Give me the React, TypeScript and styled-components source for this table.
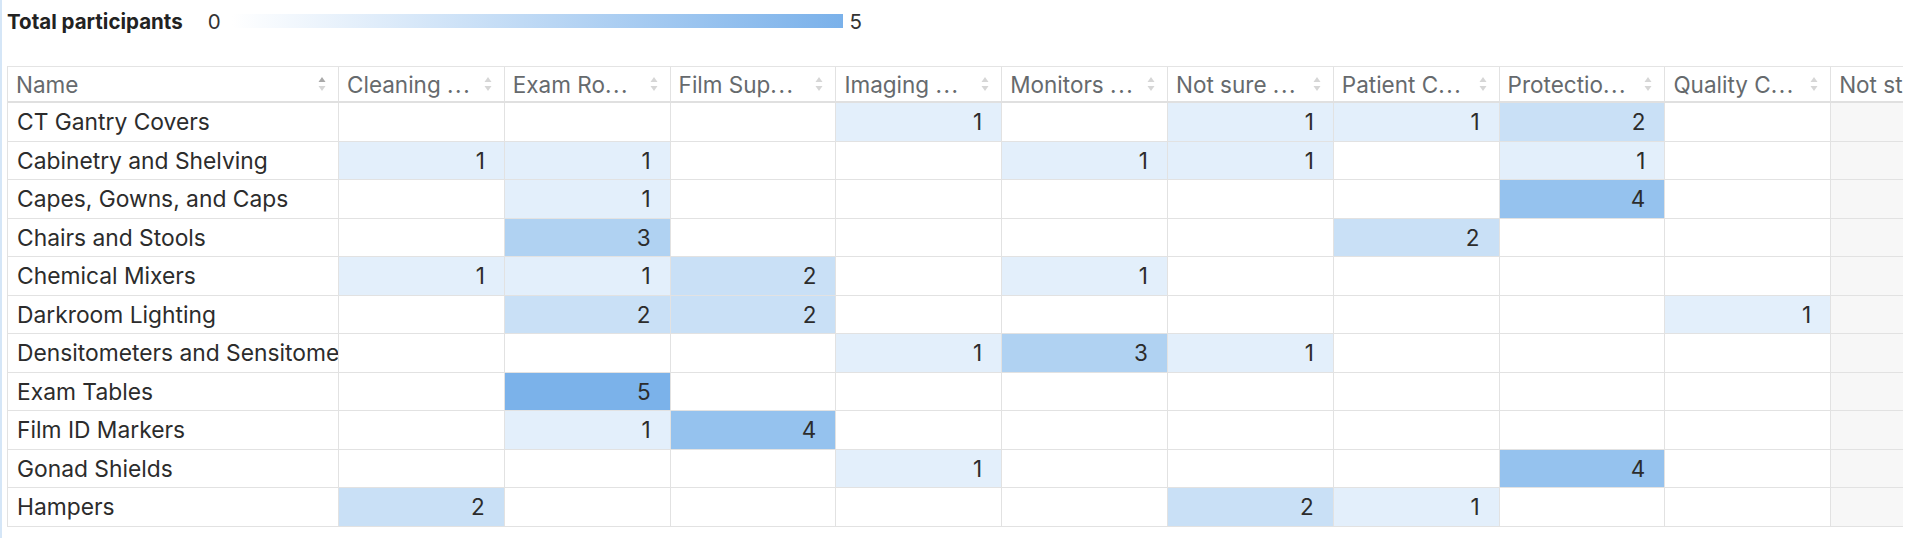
import React from "react";
import styled, { createGlobalStyle } from "styled-components";

const GlobalStyle = createGlobalStyle`
  html, body { margin: 0; padding: 0; background: #ffffff; }
  body { font-family: "Inter", "Liberation Sans", sans-serif; color: #2c2c2c; }
`;

type Row = { name: string; values: (number | null)[] };
type Header = { text: string; truncated: boolean };

const HEADERS: Header[] = [
  { text: "Cleaning ", truncated: true },
  { text: "Exam Ro", truncated: true },
  { text: "Film Sup", truncated: true },
  { text: "Imaging ", truncated: true },
  { text: "Monitors ", truncated: true },
  { text: "Not sure ", truncated: true },
  { text: "Patient C", truncated: true },
  { text: "Protectio", truncated: true },
  { text: "Quality C", truncated: true },
  { text: "Not started", truncated: false },
];

const n = null;
const ROWS: Row[] = [
  { name: "CT Gantry Covers", values: [n, n, n, 1, n, 1, 1, 2, n, n] },
  { name: "Cabinetry and Shelving", values: [1, 1, n, n, 1, 1, n, 1, n, n] },
  { name: "Capes, Gowns, and Caps", values: [n, 1, n, n, n, n, n, 4, n, n] },
  { name: "Chairs and Stools", values: [n, 3, n, n, n, n, 2, n, n, n] },
  { name: "Chemical Mixers", values: [1, 1, 2, n, 1, n, n, n, n, n] },
  { name: "Darkroom Lighting", values: [n, 2, 2, n, n, n, n, n, 1, n] },
  { name: "Densitometers and Sensitometers", values: [n, n, n, 1, 3, 1, n, n, n, n] },
  { name: "Exam Tables", values: [n, 5, n, n, n, n, n, n, n, n] },
  { name: "Film ID Markers", values: [n, 1, 4, n, n, n, n, n, n, n] },
  { name: "Gonad Shields", values: [n, n, n, 1, n, n, n, 4, n, n] },
  { name: "Hampers", values: [2, n, n, n, n, 2, 1, n, n, n] },
];

const HEAT: Record<number, string> = {
  1: "#e3effb",
  2: "#c9e0f6",
  3: "#b0d2f2",
  4: "#95c2ee",
  5: "#7bb2ea",
};

const COLS = "331px repeat(10, 165.8px)";

const Page = styled.div`
  min-height: 538px;
  box-sizing: border-box;
  border-left: 2px solid #d5e6f7;
  padding: 0 13px 0 5px;
`;

const Legend = styled.div`
  display: flex;
  align-items: center;
  height: 42px;
  margin-bottom: 24px;
`;

const LegendLabel = styled.span`
  font-size: 20.5px;
  font-weight: 700;
  color: #222;
  margin-right: 25px;
`;

const LegendValue = styled.span<{ $side: "start" | "end" }>`
  font-size: 20.5px;
  color: #333;
  ${(p) => (p.$side === "start" ? "margin-right: 11px;" : "margin-left: 7px;")}
`;

const LegendBar = styled.div`
  width: 611px;
  height: 14px;
  background: linear-gradient(to right, #ffffff 0%, #7ab1ea 100%);
`;

const Scroller = styled.div`
  overflow: hidden;
  width: 100%;
`;

const Grid = styled.div`
  width: max-content;
  border-left: 1px solid #e2e2e2;
`;

const HeaderRow = styled.div`
  display: grid;
  grid-template-columns: ${COLS};
  height: 37px;
  box-sizing: border-box;
  border-top: 1px solid #e4e4e4;
  border-bottom: 2px solid #e0e0e0;
`;

const HeaderCell = styled.div`
  display: flex;
  align-items: center;
  justify-content: space-between;
  box-sizing: border-box;
  padding: 0 12px 0 8px;
  border-right: 1px solid #e2e2e2;
  font-size: 22.5px;
  color: #666a6d;
  white-space: nowrap;
  overflow: hidden;
`;

const HeaderText = styled.span`
  overflow: hidden;
`;

const Dots = styled.span`
  letter-spacing: 1.6px;
`;

const BodyRow = styled.div`
  display: grid;
  grid-template-columns: ${COLS};
  height: 38.5px;
  box-sizing: border-box;
  border-bottom: 1px solid #e2e2e2;
`;

const NameCell = styled.div`
  display: flex;
  align-items: center;
  box-sizing: border-box;
  padding: 0 0 0 9px;
  border-right: 1px solid #e2e2e2;
  font-size: 22.8px;
  color: #2c2c2c;
  white-space: nowrap;
  overflow: hidden;
`;

const ValueCell = styled.div<{ $bg: string }>`
  display: flex;
  align-items: center;
  justify-content: flex-end;
  box-sizing: border-box;
  padding: 0 19px 0 0;
  border-right: 1px solid #e2e2e2;
  background: ${(p) => p.$bg};
  font-size: 22.5px;
  color: #2c2c2c;
`;

const SortSvg = styled.svg`
  flex: none;
  width: 8px;
  height: 20px;
`;

function SortIcon({ active }: { active?: boolean }) {
  return (
    <SortSvg viewBox="0 0 8 20">
      <polygon points="0.5,8 4,3 7.5,8" fill={active ? "#a9a9a9" : "#d6d6d6"} />
      <polygon points="0.5,12 4,17 7.5,12" fill="#d6d6d6" />
    </SortSvg>
  );
}

export default function App() {
  return (
    <Page>
      <GlobalStyle />
      <Legend>
        <LegendLabel>Total participants</LegendLabel>
        <LegendValue $side="start">0</LegendValue>
        <LegendBar />
        <LegendValue $side="end">5</LegendValue>
      </Legend>
      <Scroller>
        <Grid>
          <HeaderRow>
            <HeaderCell>
              <HeaderText>Name</HeaderText>
              <SortIcon active />
            </HeaderCell>
            {HEADERS.map((h) => (
              <HeaderCell key={h.text}>
                <HeaderText>
                  {h.text}
                  {h.truncated && <Dots>...</Dots>}
                </HeaderText>
                <SortIcon />
              </HeaderCell>
            ))}
          </HeaderRow>
          {ROWS.map((r) => (
            <BodyRow key={r.name}>
              <NameCell>{r.name}</NameCell>
              {r.values.map((v, i) => (
                <ValueCell
                  key={i}
                  $bg={v ? HEAT[v] : i === 9 ? "#f7f7f7" : "#ffffff"}
                >
                  {v ?? ""}
                </ValueCell>
              ))}
            </BodyRow>
          ))}
        </Grid>
      </Scroller>
    </Page>
  );
}
